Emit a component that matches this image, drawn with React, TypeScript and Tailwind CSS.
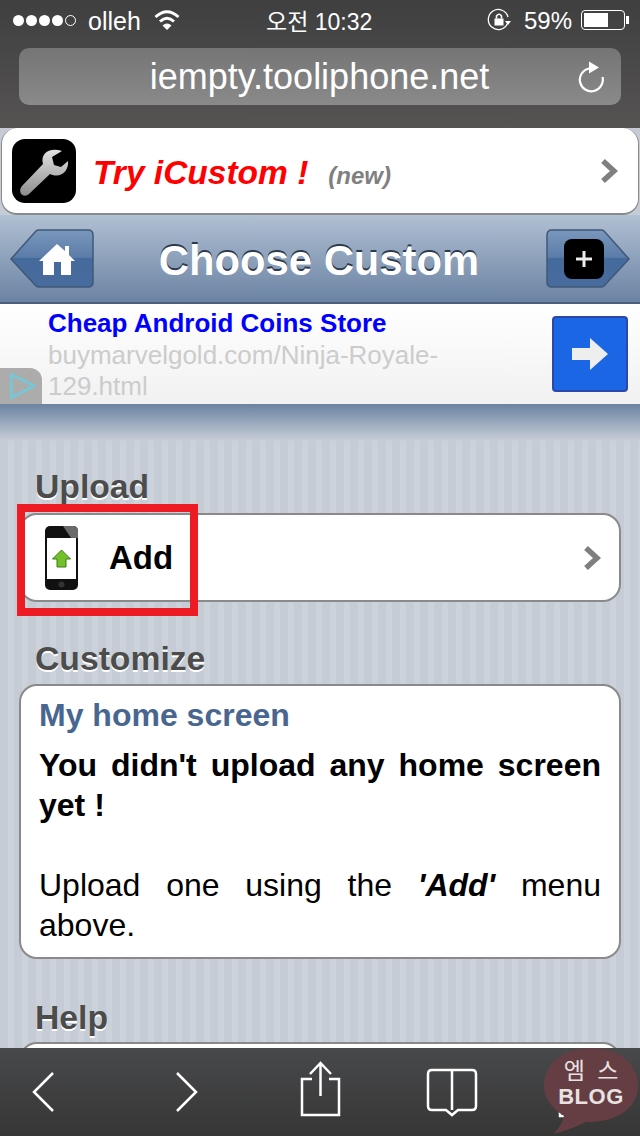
const sans = "font-['Liberation_Sans','Noto_Sans_CJK_KR',sans-serif]";

function Chevron({ className }: { className: string }) {
  return (
    <svg className={className} viewBox="0 0 18 26" fill="none">
      <path d="M3 3 L14 13 L3 23" stroke="#7f7f7f" strokeWidth="5.5" />
    </svg>
  );
}

function WrenchTile() {
  return (
    <div className="w-16 h-16 shrink-0 rounded-[13px] bg-black">
      <svg viewBox="0 0 64 64" className="w-16 h-16">
        <defs>
          <linearGradient id="wrench" x1="0" y1="0" x2="0" y2="1">
            <stop offset="0" stopColor="#e2e2e2" />
            <stop offset="1" stopColor="#8c8c8c" />
          </linearGradient>
        </defs>
        <path
          d="M10 47 L31 25 C28 15 37 8 50 12 L40 18 L42 26 L49 28 L56 22 C57 32 49 40 38 35 L17 55 C11 60 5 53 10 47Z"
          fill="url(#wrench)"
        />
      </svg>
    </div>
  );
}

function NavButton({ flip, children }: { flip?: boolean; children: React.ReactNode }) {
  const id = flip ? "navR" : "navL";
  return (
    <div className="relative w-[84px] h-[60px] shrink-0 flex items-center justify-center">
      <svg viewBox="0 0 84 60" className={`absolute inset-0 w-[84px] h-[60px] ${flip ? "-scale-x-100" : ""}`}>
        <defs>
          <linearGradient id={id} x1="0" y1="0" x2="0" y2="1">
            <stop offset="0" stopColor="#7b98bd" />
            <stop offset="0.48" stopColor="#5b7ca8" />
            <stop offset="0.5" stopColor="#456a9c" />
            <stop offset="1" stopColor="#476b9c" />
          </linearGradient>
        </defs>
        <path
          d="M1 30 L26 2 Q27 1 29 1 L78 1 Q83 1 83 6 L83 53 Q83 58 78 58 L29 58 Q27 58 26 57 Z"
          fill={`url(#${id})`}
          stroke="#3f5878"
          strokeWidth="1.5"
        />
      </svg>
      <div className="relative">{children}</div>
    </div>
  );
}

function Heading({ children }: { children: React.ReactNode }) {
  return (
    <h2 className="pl-[35px] text-[33.7px] leading-[38px] font-bold text-[#4c4c4c] [text-shadow:0_2px_0_#ffffff]">
      {children}
    </h2>
  );
}

function PhoneIcon() {
  return (
    <svg viewBox="0 0 33 64" className="w-[33px] h-16 shrink-0">
      <rect width="33" height="64" rx="5" fill="#111111" />
      <path d="M18 0 H28 Q33 0 33 5 V12 H26Z" fill="#6a6a6a" />
      <rect x="2" y="12" width="29" height="41" fill="#ffffff" />
      <circle cx="16.5" cy="58.5" r="3" fill="#333333" />
      <path d="M16.5 24 L25.5 33 H21 V41 H12 V33 H7.5 Z" fill="#72c02c" stroke="#3f7d10" strokeWidth="1" />
    </svg>
  );
}

export default function App() {
  return (
    <div className={`relative w-[640px] h-[1136px] overflow-hidden flex flex-col ${sans} bg-[repeating-linear-gradient(90deg,#c5ccd5_0px,#c5ccd5_8px,#cbd2da_8px,#cbd2da_14px)]`}>
      {/* safari top */}
      <header className="h-[128px] shrink-0 bg-gradient-to-b from-[#3f3f3f] to-[#565353] text-white">
        <div className="h-10 relative flex items-center text-[24px] pl-[13px] pr-[11px]">
          <div className="flex items-center gap-[2px]">
            {[0, 1, 2, 3].map((d) => (
              <span key={d} className="w-[11px] h-[11px] rounded-full bg-white" />
            ))}
            <span className="w-[11px] h-[11px] rounded-full border border-white" />
          </div>
          <span className="ml-[12px] mt-[3px] text-[25px]">olleh</span>
          <svg viewBox="0 0 26 22" className="ml-[13px] w-[26px] h-[22px]" fill="none" stroke="#fff" strokeWidth="3">
            <path d="M1.5 8 Q13 -2.5 24.5 8" />
            <path d="M6 12.5 Q13 6 20 12.5" />
            <path d="M13 21 L8.5 16.5 Q13 12.5 17.5 16.5 Z" fill="#fff" stroke="none" />
          </svg>
          <span className="absolute left-[266px] top-[7px] leading-[30px] text-[23px] whitespace-nowrap">오전 10:32</span>
          <div className="ml-auto flex items-center">
            <svg viewBox="0 0 24 24" className="w-6 h-6" fill="none" stroke="#fff" strokeWidth="1.3">
              <path d="M20.5 15.5 A10 10 0 1 1 21 9" />
              <path d="M18 13 H24 L21 17 Z" fill="#fff" stroke="none" />
              <rect x="7.5" y="10.5" width="9" height="7" fill="#fff" stroke="none" />
              <path d="M9.5 10.5 V8 Q12 4.5 14.5 8 V10.5" strokeWidth="1.6" />
            </svg>
            <span className="ml-[13px] mt-[2px]">59%</span>
            <div className="ml-[9px] w-[44px] h-[20px] border border-white rounded-[4px] p-[2px]">
              <div className="w-[24px] h-full bg-white" />
            </div>
            <span className="ml-[1px] w-[3px] h-[8px] bg-white" />
          </div>
        </div>
        <div className="mt-2 mx-[19px] h-[57px] rounded-[10px] bg-gradient-to-b from-[#757575] to-[#8a8a8a] relative flex items-center justify-center">
          <span className="text-[36px] leading-none mt-[1px] -ml-[1px]">iempty.tooliphone.net</span>
          <svg viewBox="0 0 28 32" className="absolute left-[558px] top-[13px] w-7 h-8" fill="none" stroke="#fff" strokeWidth="2.2">
            <path d="M12 7.5 A11.5 11.5 0 1 0 25.5 16" />
            <path d="M12 0.5 L22 6.5 L12 12.5 Z" fill="#fff" stroke="none" />
          </svg>
        </div>
      </header>

      {/* banner */}
      <div className="shrink-0 bg-[#c5ccd5] px-[1px] h-[87px]">
        <div className="h-[87px] bg-white rounded-[16px] border-b-2 border-l border-r border-[#8a8a8a] border-t-0 flex items-center pl-[10px] pr-[20px]">
          <WrenchTile />
          <span className="ml-[17px] text-[33.5px] font-bold italic text-[#ff0000] mt-[6px]">Try iCustom !</span>
          <span className="ml-[20px] mt-[11px] text-[24px] font-bold italic text-[#808080]">(new)</span>
          <Chevron className="ml-auto w-[18px] h-[26px]" />
        </div>
      </div>

      {/* nav */}
      <nav className="h-[89px] shrink-0 px-[10px] flex items-center justify-between bg-gradient-to-b from-[#b1c0d3] to-[#6b83a3] border-b-2 border-[#4a5f7c]">
        <NavButton>
          <svg viewBox="0 0 36 36" className="w-9 h-9 ml-[10px]" fill="#fff">
            <path d="M18 3 L26 10 V5 H30 V14 L36 20 H32 V34 H22 V21 H15 V34 H4 V20 H0 Z" />
          </svg>
        </NavButton>
        <h1 className="mt-[6px] -ml-[2px] text-[41.8px] font-bold text-white [text-shadow:0_-2px_0_#2d3a4d]">Choose Custom</h1>
        <NavButton flip>
          <div className="w-10 h-10 mr-[8px] rounded-[8px] bg-black flex items-center justify-center">
            <svg viewBox="0 0 16 16" className="w-4 h-4">
              <path d="M6.5 0 H9.5 V6.5 H16 V9.5 H9.5 V16 H6.5 V9.5 H0 V6.5 H6.5 Z" fill="#ececec" />
            </svg>
          </div>
        </NavButton>
      </nav>

      {/* ad */}
      <div className="relative h-[100px] shrink-0 bg-gradient-to-b from-white to-[#f1f1f1] pl-[48px] pr-3 flex">
        <div className="w-[420px] pt-[3px]">
          <div className="text-[26px] leading-[32px] font-bold text-[#0000ff] whitespace-nowrap">Cheap Android Coins Store</div>
          <div className="mt-[1px] text-[26px] leading-[31px] text-[#cccccc]">buymarvelgold.com/Ninja-Royale-129.html</div>
        </div>
        <div className="ml-auto mt-3 w-[76px] h-[76px] rounded-[4px] bg-[#1b66e4] border-2 border-[#2f47a8] flex items-center justify-center">
          <svg viewBox="0 0 36 32" className="w-9 h-8">
            <path d="M0 10 H18 V0 L36 16 L18 32 V22 H0 Z" fill="#eeeeee" />
          </svg>
        </div>
        <div className="absolute left-0 bottom-0 w-[42px] h-9 rounded-tr-[12px] bg-[#acacac] flex items-center pl-[10px]">
          <svg viewBox="0 0 26 26" className="w-[26px] h-[26px]" fill="none" stroke="#6fcbdc" strokeWidth="2.5">
            <path d="M1.5 1.5 L24 13 L1.5 24.5 Z" />
          </svg>
        </div>
      </div>

      {/* content */}
      <main className="relative flex-1 flex flex-col bg-[linear-gradient(#6b83a2,#c5ccd5_36px,transparent_37px)]">
        <div className="pt-[63px]">
          <Heading>Upload</Heading>
        </div>
        <div className="mt-[8px] mx-[19px] h-[89px] bg-white rounded-[18px] border-2 border-[#8a8a8a] flex items-center pl-[24px] pr-[18px]">
          <PhoneIcon />
          <span className="ml-[31px] text-[33px] font-bold text-black">Add</span>
          <Chevron className="ml-auto w-[18px] h-[26px]" />
        </div>
        <div className="mt-[37px]">
          <Heading>Customize</Heading>
        </div>
        <section className="mt-[7px] mx-[19px] h-[275px] bg-white rounded-[18px] border-2 border-[#8a8a8a] px-[18px] pt-[9px]">
          <h3 className="text-[32px] leading-[40px] font-bold text-[#48668f]">My home screen</h3>
          <p className="mt-[10px] text-[32px] leading-[40px] font-bold text-black text-justify">You didn't upload any home screen yet !</p>
          <p className="mt-[40px] text-[32px] leading-[40px] text-black text-justify">
            Upload one using the <b className="italic">'Add'</b> menu above.
          </p>
        </section>
        <div className="mt-[39px]">
          <Heading>Help</Heading>
        </div>
        <div className="mt-[6px] mx-[19px] h-10 bg-white rounded-t-[18px] border-2 border-[#8a8a8a]" />
      </main>

      {/* safari bottom */}
      <footer className="absolute left-0 right-0 bottom-0 h-[88px] bg-gradient-to-b from-[#48494b] to-[#363636]">
        <svg viewBox="0 0 640 88" className="w-[640px] h-[88px]" fill="none" stroke="#fff" strokeWidth="2.5">
          <path d="M53 25 L34 44 L53 63" />
          <path d="M177 25 L196 44 L177 63" />
          <path d="M312 31 H302 V67 H339 V31 H329" />
          <path d="M320.5 48 V16 M310 26 L320.5 15 L331 26" />
          <path d="M452 22 V62 M452 22 H432 Q428 22 428 26 V58 Q428 62 432 62 H446 L452 67 L458 62 H472 Q476 62 476 58 V26 Q476 22 472 22 H452" />
          <path d="M560 62 V68 H600" />
        </svg>
      </footer>

      {/* blog stamp */}
      <div className="absolute left-[544px] top-[1048px] w-[94px] h-[86px]">
        <svg viewBox="0 0 94 86" className="absolute inset-0 w-[94px] h-[86px]">
          <path
            d="M47 0 C75 0 94 15 94 38 C94 60 72 75 42 74 Q26 82 9 86 Q18 78 20 68 C8 60 0 50 0 38 C0 15 20 0 47 0 Z"
            fill="#643e43"
          />
        </svg>
        <div className="relative pt-[10px] text-center text-[#e9e2e2] font-bold">
          <div className="text-[23px] leading-[26px] font-normal tracking-[3px] pl-[3px]">엠 스</div>
          <div className="text-[22px] leading-[26px] tracking-[0.5px]">BLOG</div>
        </div>
      </div>

      {/* red annotation */}
      <div className="absolute left-[17px] top-[504px] w-[181px] h-[112px] border-[8px] border-[#ed1c24]" />
    </div>
  );
}
